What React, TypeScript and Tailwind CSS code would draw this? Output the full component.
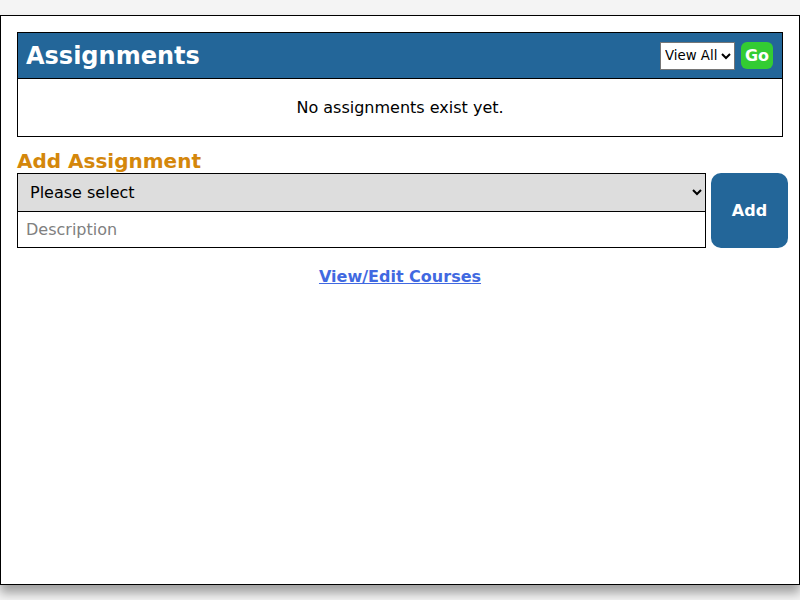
import React from "react";

export default function App() {
  const font = { fontFamily: '"DejaVu Sans", sans-serif' };
  return (
    <div className="min-h-[600px] w-[800px] bg-[#f4f4f4] pt-[15px]" style={font}>
      <div className="box-border h-[570px] w-[800px] border border-black bg-white p-4 shadow-[0_8px_10px_rgba(0,0,0,0.35)]">
        <div className="border border-black">
          <div className="flex h-[46px] items-center justify-between border-b border-black bg-[#236699] pl-2 pr-[9px]">
            <h1 className="text-[24px] font-bold leading-none text-white">Assignments</h1>
            <div className="flex items-center gap-[6px]">
              <select
                className="h-[28px] border border-[#767676] bg-white p-0 text-[13.33px] text-black"
                style={font}
                defaultValue="all"
              >
                <option value="all">View All</option>
              </select>
              <button className="h-[27px] w-[32px] rounded-[6px] bg-[#33cc33] text-[16px] font-bold text-white" style={font}>
                Go
              </button>
            </div>
          </div>
          <div className="flex h-[57px] items-center justify-center text-[16px] text-black">
            No assignments exist yet.
          </div>
        </div>
        <h2 className="mt-[12px] text-[20px] font-bold leading-[24px] text-[#d4870b]">Add Assignment</h2>
        <div className="flex w-[771px] gap-[5px]">
          <div className="flex w-[689px] shrink-0 flex-col">
            <select
              className="h-[39px] w-full border border-black bg-[#dddddd] pl-[8px] pr-[4px] text-[16px] text-black"
              style={font}
              defaultValue=""
            >
              <option value="">Please select</option>
            </select>
            <input
              className="-mt-px h-[37px] w-full border border-black bg-white px-2 text-[16px] text-black outline-none placeholder:text-[#808080]"
              style={font}
              placeholder="Description"
            />
          </div>
          <button
            className="h-[75px] w-[77px] shrink-0 rounded-[10px] bg-[#236699] text-[16px] font-bold text-white"
            style={font}
          >
            Add
          </button>
        </div>
        <div className="mt-[17px] text-center">
          <a href="#" className="text-[16px] font-bold text-[#4169e1] underline">
            View/Edit Courses
          </a>
        </div>
      </div>
    </div>
  );
}
